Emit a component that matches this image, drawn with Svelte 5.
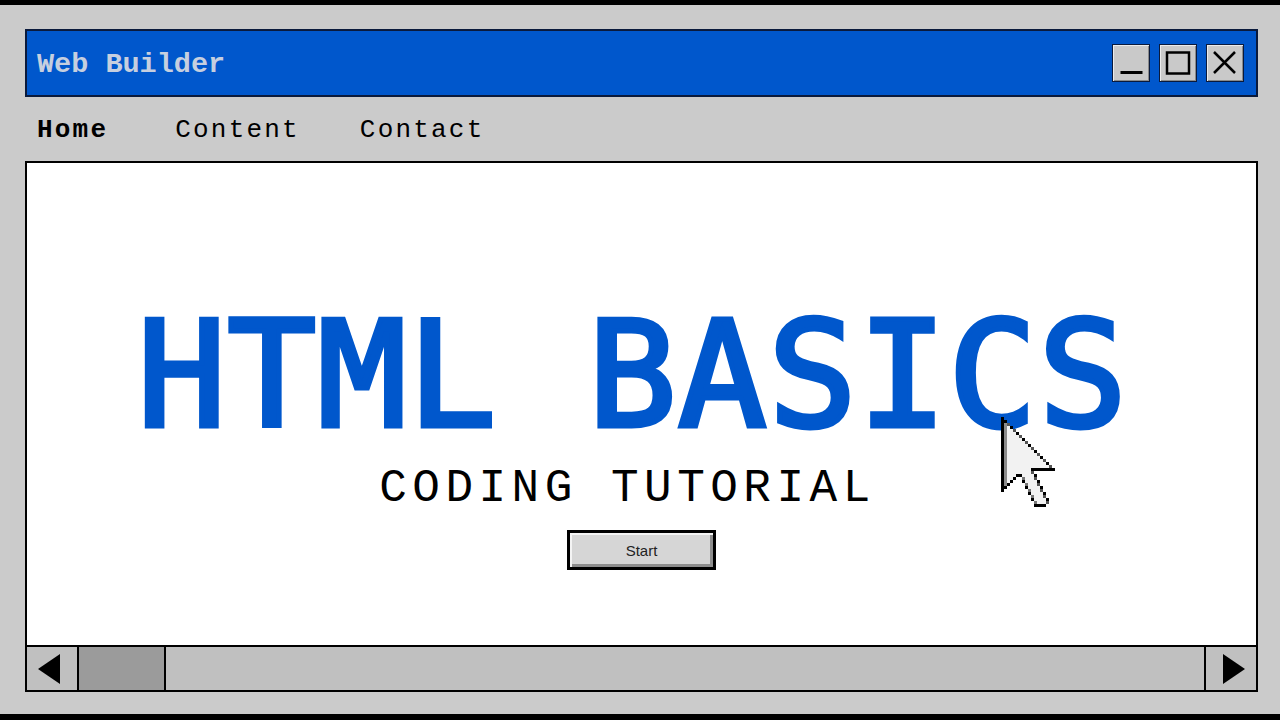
<script>
	const menu = [
		{ label: 'Home', active: true },
		{ label: 'Content', active: false },
		{ label: 'Contact', active: false }
	];

	// pointer as a 3px pixel grid, 18 columns by 30 rows
	const cursorPixels = [];
	const put = (x, y, fill) => cursorPixels.push({ x: x * 3, y: y * 3, fill });
	for (let r = 0; r < 30; r++) {
		if (r <= 24) put(0, r, '#000');
		if (r <= 17) {
			for (let x = 1; x < r; x++) put(x, r, x === 1 ? '#8c8c8c' : '#f2f2f2');
			if (r > 0) put(r, r, r % 2 ? '#000' : '#555');
		}
		if (r === 17) for (let x = 10; x <= 17; x++) put(x, r, '#000');
		if (r > 17 && r <= 24) {
			for (let x = 1; x < 24 - r; x++) put(x, r, x === 1 ? '#8c8c8c' : '#f2f2f2');
			put(24 - r, r, '#000');
		}
		if (r > 17 && r <= 28) {
			const left = 6 + Math.floor((r - 18) / 2);
			const right = 10 + Math.floor((r - 17) / 2);
			for (let x = left; x < right; x++) put(x, r, r % 4 < 2 && x === left ? '#9a9a9a' : '#f2f2f2');
			if (r > 18) put(left, r, r % 2 ? '#000' : '#777');
			put(right, r, r % 2 ? '#000' : '#555');
		}
		if (r === 29) for (let x = 11; x <= 14; x++) put(x, r, '#000');
	}
</script>

<div class="screen">
	<div class="desktop">
		<header class="titlebar">
			<span class="title">Web Builder</span>
			<div class="controls">
				<button class="ctl ctl-min" aria-label="Minimize">
					<svg viewBox="0 0 36 36"><rect x="7.5" y="26" width="22" height="3" fill="#000" /></svg>
				</button>
				<button class="ctl" aria-label="Maximize">
					<svg viewBox="0 0 36 36"><rect x="7" y="7.5" width="22" height="21" fill="none" stroke="#000" stroke-width="2.5" /></svg>
				</button>
				<button class="ctl" aria-label="Close">
					<svg viewBox="0 0 36 36"><path d="M7 7 L28 28 M28 7 L7 28" stroke="#000" stroke-width="2.5" fill="none" /></svg>
				</button>
			</div>
		</header>

		<nav class="menu">
			{#each menu as item}
				<span class="menu-item" class:active={item.active}>{item.label}</span>
			{/each}
		</nav>

		<main class="window">
			<div class="content">
				<h1>HTML BASICS</h1>
				<h2>CODING TUTORIAL</h2>
				<button class="start"><span>Start</span></button>
			</div>
			<svg class="cursor" viewBox="0 0 54 90" width="54" height="90" shape-rendering="crispEdges">
				{#each cursorPixels as p}
					<rect x={p.x} y={p.y} width="3" height="3" fill={p.fill} />
				{/each}
			</svg>
			<div class="scrollbar">
				<div class="arrow">
					<svg viewBox="0 0 50 44" width="50" height="44"><polygon points="11,22 33,7 33,37" fill="#000" /></svg>
				</div>
				<div class="thumb"></div>
				<div class="track"></div>
				<div class="arrow arrow-right">
					<svg viewBox="0 0 50 44" width="50" height="44"><polygon points="17,7 39,22 17,37" fill="#000" /></svg>
				</div>
			</div>
		</main>
	</div>
</div>

<style>
	:global(body) {
		margin: 0;
		background: #000;
	}

	.screen {
		width: 1280px;
		height: 720px;
		box-sizing: border-box;
		padding: 5px 0 6px;
		background: #000;
		overflow: hidden;
	}

	.desktop {
		height: 100%;
		box-sizing: border-box;
		padding: 24px 22px 22px 25px;
		background: #cbcbcb;
		display: flex;
		flex-direction: column;
	}

	.titlebar {
		height: 68px;
		box-sizing: border-box;
		border: 2px solid #0a1a3c;
		background: #0057cc;
		display: flex;
		align-items: center;
		justify-content: space-between;
		padding: 0 12px 0 10px;
	}

	.title {
		position: relative;
		top: 1px;
		font-family: 'Liberation Mono', monospace;
		font-weight: 700;
		font-size: 28.5px;
		color: #c6cfdf;
	}

	.controls {
		display: flex;
		gap: 9px;
	}

	.ctl {
		width: 38px;
		height: 38px;
		padding: 0;
		border: 1px solid #0a1a3c;
		background: #c9c9c9;
		box-shadow: inset 1px 1px 0 #ececec, inset -1px -1px 0 #8a8a8a;
		display: flex;
		align-items: center;
		justify-content: center;
	}

	.ctl svg {
		width: 36px;
		height: 36px;
		display: block;
		flex: none;
	}

	.menu {
		height: 64px;
		display: flex;
		align-items: center;
		padding: 2px 0 0 12px;
		box-sizing: border-box;
		gap: 60px;
		font-family: 'Liberation Mono', monospace;
		font-size: 26px;
		letter-spacing: 2.2px;
		color: #000;
	}

	.menu-item.active {
		font-weight: 700;
		margin-right: 7px;
	}

	.window {
		flex: 1;
		position: relative;
		box-sizing: border-box;
		border: 2px solid #000;
		background: #fff;
		display: flex;
		flex-direction: column;
	}

	.content {
		flex: 1;
		display: flex;
		flex-direction: column;
		align-items: center;
		padding-top: 148px;
	}

	h1 {
		margin: 0 17px 0 0;
		font-family: 'DejaVu Sans Mono', monospace;
		font-weight: 400;
		font-size: 147px;
		line-height: 130px;
		letter-spacing: 1.6px;
		-webkit-text-stroke: 5px #0057cc;
		color: #0057cc;
		white-space: pre;
	}

	h2 {
		margin: 22px 0 0 -28px;
		font-family: 'Liberation Mono', monospace;
		font-weight: 400;
		font-size: 46px;
		line-height: 52px;
		letter-spacing: 5.5px;
		color: #000;
	}

	.start {
		margin-top: 15px;
		width: 149px;
		height: 40px;
		padding: 0;
		border: 3px solid #000;
		background: #d6d6d6;
		box-shadow: inset 2px 2px 0 #f4f4f4, inset -3px -3px 0 #8e8e8e;
		font-family: 'Liberation Sans', sans-serif;
		font-size: 15px;
		color: #222;
	}

	.cursor {
		position: absolute;
		left: 974px;
		top: 254px;
	}

	.scrollbar {
		height: 45px;
		box-sizing: border-box;
		border-top: 2px solid #000;
		background: #c0c0c0;
		display: flex;
	}

	.arrow {
		width: 50px;
		border-right: 2px solid #000;
		display: flex;
		align-items: center;
	}

	.arrow-right {
		border-right: 0;
		border-left: 2px solid #000;
	}

	.thumb {
		width: 85px;
		background: #9b9b9b;
		border-right: 2px solid #000;
	}

	.track {
		flex: 1;
	}
</style>
